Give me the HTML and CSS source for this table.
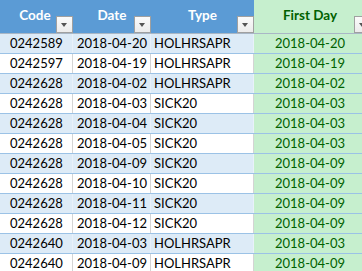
FILE: index.html
```html
<!DOCTYPE html>
<html>
<head>
<meta charset="utf-8">
<link rel="stylesheet" href="styles.css">
</head>
<body>
<div class="sheet">
  <div class="row head">
    <div class="hc c-code">Code<span class="dd"></span></div>
    <div class="hc c-date">Date<span class="dd"></span></div>
    <div class="hc c-type">Type<span class="dd"></span></div>
    <div class="hc hc-first">First Day<span class="dd"></span></div>
  </div>
  <div class="row band"><div class="cell c-code">0242589</div><div class="cell c-date">2018-04-20</div><div class="cell c-type">HOLHRSAPR</div><div class="cell c-first">2018-04-20</div></div>
  <div class="row"><div class="cell c-code">0242597</div><div class="cell c-date">2018-04-19</div><div class="cell c-type">HOLHRSAPR</div><div class="cell c-first">2018-04-19</div></div>
  <div class="row band"><div class="cell c-code">0242628</div><div class="cell c-date">2018-04-02</div><div class="cell c-type">HOLHRSAPR</div><div class="cell c-first">2018-04-02</div></div>
  <div class="row"><div class="cell c-code">0242628</div><div class="cell c-date">2018-04-03</div><div class="cell c-type">SICK20</div><div class="cell c-first">2018-04-03</div></div>
  <div class="row band"><div class="cell c-code">0242628</div><div class="cell c-date">2018-04-04</div><div class="cell c-type">SICK20</div><div class="cell c-first">2018-04-03</div></div>
  <div class="row"><div class="cell c-code">0242628</div><div class="cell c-date">2018-04-05</div><div class="cell c-type">SICK20</div><div class="cell c-first">2018-04-03</div></div>
  <div class="row band"><div class="cell c-code">0242628</div><div class="cell c-date">2018-04-09</div><div class="cell c-type">SICK20</div><div class="cell c-first">2018-04-09</div></div>
  <div class="row"><div class="cell c-code">0242628</div><div class="cell c-date">2018-04-10</div><div class="cell c-type">SICK20</div><div class="cell c-first">2018-04-09</div></div>
  <div class="row band"><div class="cell c-code">0242628</div><div class="cell c-date">2018-04-11</div><div class="cell c-type">SICK20</div><div class="cell c-first">2018-04-09</div></div>
  <div class="row"><div class="cell c-code">0242628</div><div class="cell c-date">2018-04-12</div><div class="cell c-type">SICK20</div><div class="cell c-first">2018-04-09</div></div>
  <div class="row band"><div class="cell c-code">0242640</div><div class="cell c-date">2018-04-03</div><div class="cell c-type">HOLHRSAPR</div><div class="cell c-first">2018-04-03</div></div>
  <div class="row"><div class="cell c-code">0242640</div><div class="cell c-date">2018-04-09</div><div class="cell c-type">HOLHRSAPR</div><div class="cell c-first">2018-04-09</div></div>
</div>
</body>
</html>
```

FILE: styles.css
```css
html, body {
  margin: 0;
  padding: 0;
  background: #ffffff;
  overflow: hidden;
}

.sheet {
  width: 366px;
  font-family: Lato, "Open Sans", sans-serif;
  font-size: 13px;
  color: #000000;
}

.row {
  display: grid;
  grid-template-columns: 73px 78px 103px 112px;
  height: 20px;
  box-sizing: border-box;
  border-bottom: 1px solid #9bc2e6;
}

/* header */
.head {
  height: 34px;
  background: #5b9bd5;
  border-bottom: 1px solid #a9b7c6;
}
.hc {
  position: relative;
  padding-top: 6px;
  line-height: 18px;
  font-weight: 700;
  font-size: 13.5px;
  color: #ffffff;
  text-align: center;
  white-space: nowrap;
}
.hc.c-code { padding-right: 3px; }
.hc-first {
  background: #c6efce;
  color: #006100;
}

.dd {
  position: absolute;
  right: 0;
  bottom: 0;
  width: 17px;
  height: 17px;
  box-sizing: border-box;
  border: 1px solid #a0a0a0;
  background: linear-gradient(#fbfbfb, #ececec);
}
.dd::after {
  content: "";
  position: absolute;
  left: 4px;
  top: 6px;
  border-left: 3.5px solid transparent;
  border-right: 3.5px solid transparent;
  border-top: 4px solid #555555;
}
.hc-first .dd { right: auto; left: 100px; }

/* body cells */
.cell {
  box-sizing: border-box;
  white-space: nowrap;
  overflow: hidden;
  line-height: 19px;
  border-right: 1px solid #d4d4d4;
}
.band .cell { background: #ddebf7; border-right-color: #e9f1fa; }

.cell.c-code { padding-left: 10px; }
.cell.c-date { text-align: center; padding-left: 1px; }
.cell.c-type { padding-left: 3px; }
.cell.c-first {
  background: #c6efce;
  color: #006100;
  text-align: center;
  border-right: none;
}
```
